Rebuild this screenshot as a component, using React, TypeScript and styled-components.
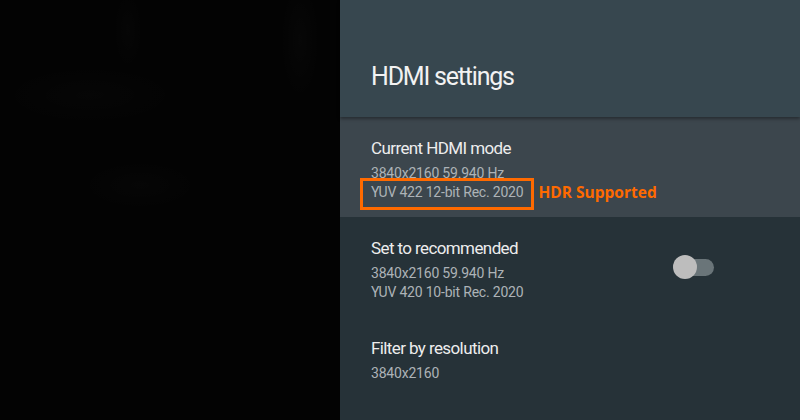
import styled, { createGlobalStyle } from 'styled-components'

const GlobalStyle = createGlobalStyle`
  html, body {
    margin: 0;
    padding: 0;
    background: #000;
  }
  body {
    font-family: Roboto, "Noto Sans", sans-serif;
  }
`

const Screen = styled.div`
  display: flex;
  width: 800px;
  height: 420px;
  overflow: hidden;
`

const Backdrop = styled.div`
  width: 340px;
  height: 100%;
  background:
    radial-gradient(ellipse 90px 30px at 90px 95px, rgba(255, 255, 255, 0.012), transparent),
    radial-gradient(ellipse 60px 25px at 140px 185px, rgba(255, 255, 255, 0.01), transparent),
    radial-gradient(ellipse 20px 60px at 300px 40px, rgba(255, 255, 255, 0.015), transparent),
    radial-gradient(ellipse 15px 40px at 128px 30px, rgba(255, 255, 255, 0.012), transparent),
    #030303;
`

const Panel = styled.div`
  flex: 1;
  display: flex;
  flex-direction: column;
  background: #263238;
`

const Header = styled.div`
  position: relative;
  z-index: 1;
  height: 117px;
  box-sizing: border-box;
  padding: 62px 0 0 31px;
  background: #37474f;
  box-shadow: 0 2px 3px rgba(0, 0, 0, 0.35);
`

const HeaderTitle = styled.h1`
  margin: 0;
  font-family: Roboto, sans-serif;
  font-weight: 400;
  font-size: 25px;
  line-height: 30px;
  letter-spacing: -1.2px;
  color: #f2f2f2;
`

const Row = styled.div<{ $focused?: boolean }>`
  display: flex;
  align-items: flex-start;
  height: 100px;
  box-sizing: border-box;
  padding: 21px 86px 0 31px;
  background: ${(p) => (p.$focused ? '#3c464d' : 'transparent')};
`

const RowText = styled.div`
  flex: 1;
  display: flex;
  flex-direction: column;
`

const RowTitle = styled.div`
  font-size: 17px;
  line-height: 20px;
  letter-spacing: -0.6px;
  color: #ededed;
  margin-bottom: 6px;
`

const RowSub = styled.div`
  display: flex;
  align-items: center;
  font-size: 14px;
  line-height: 19px;
  letter-spacing: -0.2px;
  color: #adb3b7;
`

const Marked = styled.span`
  position: relative;

  &::after {
    content: '';
    position: absolute;
    left: -11px;
    right: -11px;
    top: -5px;
    bottom: -8px;
    border: 3px solid #ff6a00;
  }
`

const Note = styled.span`
  margin-left: 15px;
  font-family: "Open Sans", sans-serif;
  font-weight: 700;
  font-size: 15.5px;
  letter-spacing: 0;
  color: #ff6a00;
`

const Switch = styled.div`
  position: relative;
  align-self: center;
  width: 41px;
  height: 24px;
  margin-top: -21px;
`

const Track = styled.div`
  position: absolute;
  right: 0;
  top: 4px;
  width: 34px;
  height: 17px;
  border-radius: 9px;
  background: #6a7579;
`

const Knob = styled.div`
  position: absolute;
  left: 0;
  top: 0;
  width: 24px;
  height: 24px;
  border-radius: 50%;
  background: #bdbdbd;
`

export default function App() {
  return (
    <>
      <GlobalStyle />
      <Screen>
        <Backdrop />
        <Panel>
          <Header>
            <HeaderTitle>HDMI settings</HeaderTitle>
          </Header>
          <Row $focused>
            <RowText>
              <RowTitle>Current HDMI mode</RowTitle>
              <RowSub>3840x2160 59.940 Hz</RowSub>
              <RowSub>
                <Marked>YUV 422 12-bit Rec. 2020</Marked>
                <Note>HDR Supported</Note>
              </RowSub>
            </RowText>
          </Row>
          <Row>
            <RowText>
              <RowTitle>Set to recommended</RowTitle>
              <RowSub>3840x2160 59.940 Hz</RowSub>
              <RowSub>YUV 420 10-bit Rec. 2020</RowSub>
            </RowText>
            <Switch>
              <Track />
              <Knob />
            </Switch>
          </Row>
          <Row>
            <RowText>
              <RowTitle>Filter by resolution</RowTitle>
              <RowSub>3840x2160</RowSub>
            </RowText>
          </Row>
        </Panel>
      </Screen>
    </>
  )
}
